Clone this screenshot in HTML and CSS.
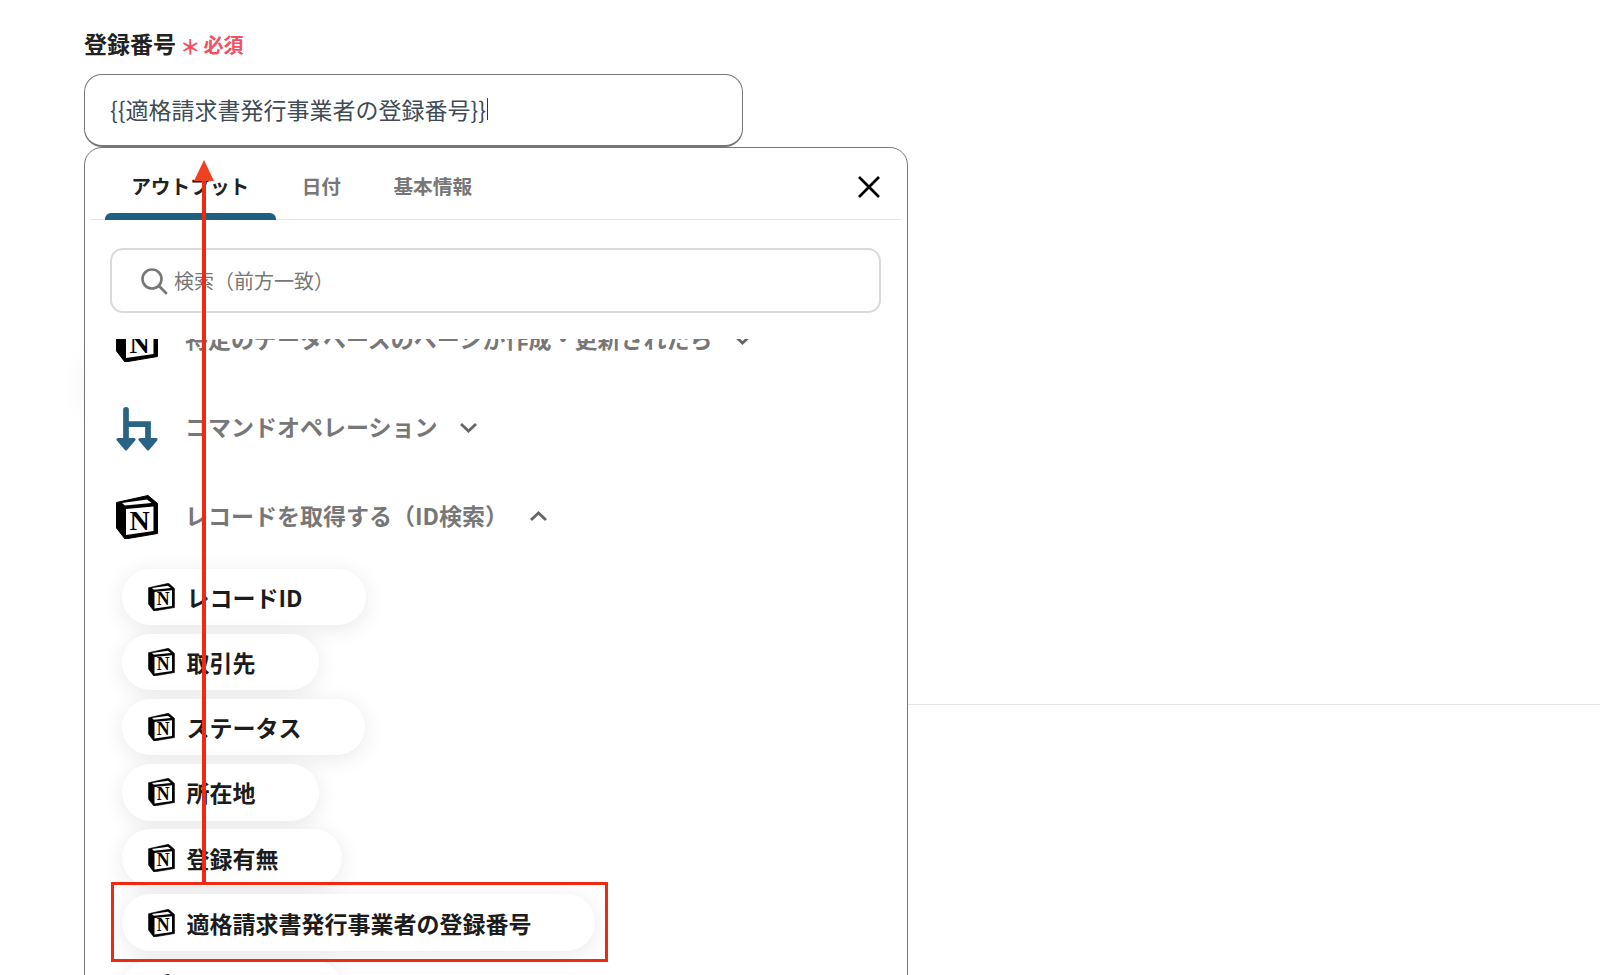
FILE: index.html
```html
<!DOCTYPE html>
<html lang="ja">
<head>
<meta charset="utf-8">
<title>登録番号</title>
<link rel="stylesheet" href="styles.css">
</head>
<body>
<svg class="defs" width="0" height="0" aria-hidden="true">
  <symbol id="cube" viewBox="0 0 42 44">
    <path d="M0.500 7.500 L32 0.500 L41.500 8.500 L41.500 38.500 L9 44 L0.500 33 Z" fill="#000" stroke="#000" stroke-width="1" stroke-linejoin="round"/>
    <path d="M6 8 L31 4.500 L35.500 8 L9 10.500 Z" fill="#fff"/>
    <path d="M10 14 L37.500 11.500 L37.500 36 L10 40 Z" fill="#fff"/>
  </symbol>
</svg>
<main class="page">
  <div class="field-label">
    <span class="label-text">登録番号</span>
    <span class="req-star">＊</span>
    <span class="req-text">必須</span>
  </div>
  <div class="text-input">
    <span class="input-value">{{適格請求書発行事業者の登録番号}}</span><span class="caret"></span>
  </div>
  <hr class="section-rule">
  <div class="ghost-card"></div>

  <section class="picker">
    <div class="tabs">
      <div class="tab tab-active">アウトプット</div>
      <div class="tab">日付</div>
      <div class="tab">基本情報</div>
      <button class="close" type="button" aria-label="閉じる">
        <svg width="24" height="24" viewBox="0 0 24 24"><path d="M2 2 L22 22 M22 2 L2 22" stroke="#000" stroke-width="2.700" fill="none"/></svg>
      </button>
    </div>
    <div class="search">
      <svg class="search-icon" width="28" height="28" viewBox="0 0 28 28"><circle cx="12" cy="12" r="9.500" fill="none" stroke="#777" stroke-width="2.600"/><path d="M19 19 L26 26" stroke="#777" stroke-width="2.800" stroke-linecap="round"/></svg>
      <span class="search-text">検索（前方一致）</span>
    </div>
    <div class="scroller">
      <div class="scroll-inner">
        <div class="group-row">
          <svg class="group-icon" viewBox="0 0 42 44"><use href="#cube"/><text class="notion-n" x="23.700" y="35">N</text></svg>
          <span class="group-title">特定のデータベースのページが作成・更新されたら</span>
          <svg class="chev" width="19" height="11" viewBox="0 0 19 11"><path d="M2 2 L9.500 9 L17 2" fill="none" stroke="#666" stroke-width="2.800"/></svg>
        </div>
        <div class="group-row">
          <svg class="group-icon" viewBox="0 0 43 46"><path d="M10 3 V35 M10 18 H33 V35" fill="none" stroke="#2a6485" stroke-width="6" stroke-linecap="round"/><path d="M1.500 34 H18.500 L10 44 Z M24.500 34 H41.500 L33 44 Z" fill="#2a6485" stroke="#2a6485" stroke-width="3" stroke-linejoin="round"/></svg>
          <span class="group-title">コマンドオペレーション</span>
          <svg class="chev" width="19" height="11" viewBox="0 0 19 11"><path d="M2 2 L9.500 9 L17 2" fill="none" stroke="#666" stroke-width="2.800"/></svg>
        </div>
        <div class="group-row">
          <svg class="group-icon" viewBox="0 0 42 44"><use href="#cube"/><text class="notion-n" x="23.700" y="35">N</text></svg>
          <span class="group-title">レコードを取得する（ID検索）</span>
          <svg class="chev" width="19" height="11" viewBox="0 0 19 11"><path d="M2 9 L9.500 2 L17 9" fill="none" stroke="#666" stroke-width="2.800"/></svg>
        </div>
        <ul class="pills">
          <li class="pill"><svg class="pill-icon" viewBox="0 0 42 44"><use href="#cube"/><text class="notion-n" x="23.700" y="35">N</text></svg>レコードID</li>
          <li class="pill"><svg class="pill-icon" viewBox="0 0 42 44"><use href="#cube"/><text class="notion-n" x="23.700" y="35">N</text></svg>取引先</li>
          <li class="pill"><svg class="pill-icon" viewBox="0 0 42 44"><use href="#cube"/><text class="notion-n" x="23.700" y="35">N</text></svg>ステータス</li>
          <li class="pill"><svg class="pill-icon" viewBox="0 0 42 44"><use href="#cube"/><text class="notion-n" x="23.700" y="35">N</text></svg>所在地</li>
          <li class="pill"><svg class="pill-icon" viewBox="0 0 42 44"><use href="#cube"/><text class="notion-n" x="23.700" y="35">N</text></svg>登録有無</li>
          <li class="pill"><svg class="pill-icon" viewBox="0 0 42 44"><use href="#cube"/><text class="notion-n" x="23.700" y="35">N</text></svg>適格請求書発行事業者の登録番号</li>
          <li class="pill"><svg class="pill-icon" viewBox="0 0 42 44"><use href="#cube"/><text class="notion-n" x="23.700" y="35">N</text></svg>登録有無</li>
        </ul>
      </div>
    </div>
  </section>

  <div class="highlight-box"></div>
  <svg class="arrow" width="24" height="724" viewBox="0 0 24 724"><path d="M12 20 V724" stroke="#ee2a12" stroke-width="4"/><path d="M12 0 L22 21 H2 Z" fill="#ee4322"/></svg>
</main>
</body>
</html>
```
FILE: styles.css
```css
* { box-sizing: border-box; }
html, body { margin: 0; padding: 0; background: #fff; }
body { font-family: "Noto Sans CJK JP", "Liberation Sans", sans-serif; }
.defs { position: absolute; }
.notion-n { font-family: "Liberation Serif", serif; font-weight: 700; font-size: 28px; fill: #000; text-anchor: middle; }

.page {
  position: relative;
  height: 975px;
  overflow: hidden;
  padding: 27px 0 0 84px;
}

.field-label {
  display: flex;
  align-items: center;
  height: 34px;
  color: #222;
  font-weight: 700;
}
.label-text { font-size: 23px; line-height: 34px; margin-top: -2px; }
.req-star { font-size: 20.5px; color: #f2505f; margin-left: 4px; margin-top: 3px; }
.req-text { font-size: 20px; color: #f2505f; margin-left: 3px; }

.text-input {
  display: flex;
  align-items: center;
  width: 659px;
  height: 73px;
  margin-top: 13px;
  padding: 0 0 2px 25px;
  border: 1.5px solid #777;
  border-bottom-width: 2px;
  border-radius: 18px;
  color: #3f4c55;
  font-size: 23px;
  background: #fff;
}
.caret { display: block; width: 1px; height: 22px; background: #333; margin-left: 1px; }

.section-rule {
  height: 1px;
  margin: 557px 0 0;
  border: 0;
  background: #e3e3e3;
}

.ghost-card {
  position: absolute;
  top: 360px;
  left: 84px;
  width: 300px;
  height: 50px;
  box-shadow: 0 0 28px rgba(0, 0, 0, 0.05);
}

.picker {
  position: absolute;
  z-index: 1;
  top: 147px;
  left: 84px;
  width: 824px;
  height: 900px;
  border: 1.5px solid #777;
  border-radius: 18px;
  background: #fff;
}

.tabs {
  display: flex;
  align-items: center;
  height: 72px;
  margin: 0 6px 0 4.500px;
  padding-left: 15.500px;
  border-bottom: 1.5px solid #e4e4e4;
}
.tab {
  position: relative;
  align-self: stretch;
  display: flex;
  align-items: center;
  padding: 4px 26.200px 0;
  font-size: 19.7px;
  font-weight: 700;
  color: #777;
}
.tab-active { color: #222; }
.tab-active::after {
  content: "";
  position: absolute;
  left: 0;
  right: 0;
  bottom: -1px;
  height: 7px;
  border-radius: 6px 6px 0 0;
  background: #1f5f80;
}
.close {
  margin-left: auto;
  margin-right: 20px;
  margin-top: 7px;
  padding: 0;
  border: 0;
  background: none;
  display: flex;
}

.search {
  display: flex;
  align-items: center;
  height: 65px;
  margin: 28px 26px 0 25px;
  padding-left: 28px;
  border: 2px solid #dadada;
  border-radius: 13px;
}
.search-text { margin-left: 6px; font-size: 20px; color: #777; }

.scroller {
  height: 700px;
  margin-top: 26px;
  overflow: hidden;
}
.scroll-inner { margin-top: -43px; padding-left: 31px; }

.group-row {
  display: flex;
  align-items: center;
  height: 88.500px;
}
.group-icon { width: 42px; height: 44px; flex: none; }
.group-title {
  margin-left: 27px;
  padding-bottom: 5px;
  font-size: 23px;
  font-weight: 700;
  color: #777;
}
.chev { margin: 0 0 2px 21px; flex: none; }

.pills {
  list-style: none;
  margin: 7px 0 0 5.500px;
  padding: 0;
  display: flex;
  flex-direction: column;
  align-items: flex-start;
  gap: 8.700px;
}
.pill {
  display: flex;
  align-items: center;
  height: 56.500px;
  padding: 0 63.500px 0 26px;
  border-radius: 29px;
  background: #fff;
  box-shadow: 0 4px 22px rgba(0, 0, 0, 0.09);
  color: #1c1c1c;
  font-size: 23px;
  font-weight: 700;
}
.pill-icon { width: 27px; height: 28px; margin-right: 12px; flex: none; }

.highlight-box {
  position: absolute;
  z-index: 2;
  left: 111px;
  top: 882px;
  width: 497px;
  height: 80px;
  border: 3px solid #ee2a12;
}
.arrow {
  position: absolute;
  z-index: 3;
  left: 192px;
  top: 160px;
}
```
